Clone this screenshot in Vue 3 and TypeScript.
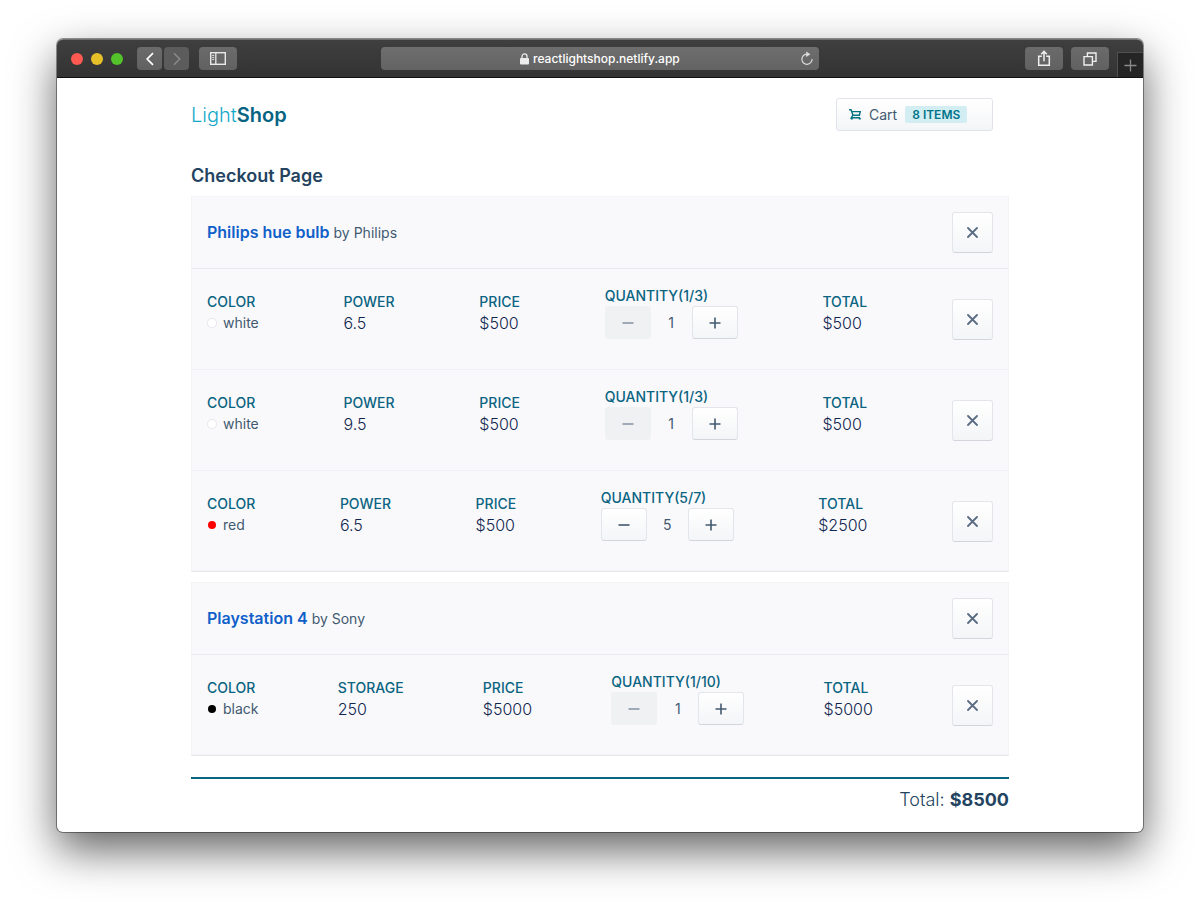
<script setup lang="ts">
import { computed, reactive } from 'vue'

interface Variant {
  id: number
  color: string
  swatch: string
  specLabel: string
  spec: string
  price: number
  count: number
  stock: number
}

interface Product {
  id: number
  name: string
  brand: string
  variants: Variant[]
}

const products = reactive<Product[]>([
  {
    id: 1,
    name: 'Philips hue bulb',
    brand: 'Philips',
    variants: [
      { id: 1, color: 'white', swatch: '#ffffff', specLabel: 'Power', spec: '6.5', price: 500, count: 1, stock: 3 },
      { id: 2, color: 'white', swatch: '#ffffff', specLabel: 'Power', spec: '9.5', price: 500, count: 1, stock: 3 },
      { id: 3, color: 'red', swatch: '#ff0000', specLabel: 'Power', spec: '6.5', price: 500, count: 5, stock: 7 },
    ],
  },
  {
    id: 2,
    name: 'Playstation 4',
    brand: 'Sony',
    variants: [
      { id: 4, color: 'black', swatch: '#000000', specLabel: 'Storage', spec: '250', price: 5000, count: 1, stock: 10 },
    ],
  },
])

const allVariants = computed(() => products.flatMap((p) => p.variants))
const itemCount = computed(() => allVariants.value.reduce((sum, v) => sum + v.count, 0))
const total = computed(() => allVariants.value.reduce((sum, v) => sum + v.count * v.price, 0))

function removeProduct(product: Product) {
  products.splice(products.indexOf(product), 1)
}

function removeVariant(product: Product, variant: Variant) {
  product.variants.splice(product.variants.indexOf(variant), 1)
}
</script>

<template>
  <div class="window">
    <div class="toolbar">
      <div class="lights">
        <span class="light close"></span>
        <span class="light minimize"></span>
        <span class="light expand"></span>
      </div>
      <div class="history">
        <button class="tool narrow" type="button" aria-label="Back">
          <svg width="10" height="14" viewBox="0 0 10 14"><path d="M8 1.2 2.2 7 8 12.8" fill="none" stroke="#fff" stroke-width="1.7" /></svg>
        </button>
        <button class="tool narrow" type="button" aria-label="Forward" disabled>
          <svg width="10" height="14" viewBox="0 0 10 14"><path d="M2 1.2 7.8 7 2 12.8" fill="none" stroke="#8c8c8c" stroke-width="1.4" /></svg>
        </button>
      </div>
      <button class="tool" type="button" aria-label="Show sidebar">
        <svg width="16" height="13" viewBox="0 0 16 13">
          <rect x=".7" y=".7" width="14.6" height="11.6" fill="none" stroke="#e8e8e8" stroke-width="1.4" />
          <path d="M5.8 1v11" stroke="#e8e8e8" stroke-width="1.3" />
          <path d="M2.2 3.4h2M2.2 5.4h2M2.2 7.4h2" stroke="#e8e8e8" stroke-width="1" />
        </svg>
      </button>
      <div class="address">
        <svg class="lock" width="9" height="12" viewBox="0 0 9 12">
          <rect x="0" y="5" width="9" height="6.5" rx="1" fill="#ececec" />
          <path d="M2 5.5V3.4a2.5 2.5 0 0 1 5 0v2.1" fill="none" stroke="#ececec" stroke-width="1.3" />
        </svg>
        <input class="url" type="text" value="reactlightshop.netlify.app" aria-label="Address" readonly />
        <button class="reload" type="button" aria-label="Reload">
          <svg width="14" height="15" viewBox="0 0 14 15">
            <path d="M6.6 3.1a5.1 5.1 0 1 0 5.5 5" fill="none" stroke="#dcdcdc" stroke-width="1.2" />
            <path d="M6.2.4 10.4 3.2 6.2 6z" fill="#dcdcdc" />
          </svg>
        </button>
      </div>
      <div class="actions">
        <button class="tool" type="button" aria-label="Share">
          <svg width="14" height="17" viewBox="0 0 14 17" fill="none" stroke="#efefef" stroke-width="1.5">
            <path d="M4.8 6.2H1.7v9.1h10.6V6.2H9.2M7 11.2V1.6M4.2 4.2 7 1.4l2.8 2.8" />
          </svg>
        </button>
        <button class="tool" type="button" aria-label="Show all tabs">
          <svg width="14" height="14" viewBox="0 0 14 14" fill="none" stroke="#efefef" stroke-width="1.4">
            <path d="M1 4.6h8.4V13H1zM4.4 4.4V1H13v8.4H9.6" />
          </svg>
        </button>
      </div>
      <button class="new-tab" type="button" aria-label="New tab">
        <svg width="13" height="13" viewBox="0 0 13 13"><path d="M6.5.5v12M.5 6.5h12" stroke="#8b8b8b" stroke-width="1.3" /></svg>
      </button>
    </div>

    <div class="page">
      <header class="site-header">
        <a class="logo" href="#"><span class="logo-light">Light</span><span class="logo-bold">Shop</span></a>
        <button class="cart" type="button">
          <svg width="12" height="11" viewBox="0 0 12 11" fill="none" stroke="#047481" stroke-width="1.4">
            <path d="M0 .8h2l2 5.4h6.4l.9-3.6H2.6" />
            <path d="M4 6.2 2.3 8.8h8.9" />
            <path d="M1.8 9.8h2M9.8 9.8h2" stroke-width="1.6" />
          </svg>
          <span>Cart</span>
          <span class="badge">{{ itemCount }} ITEMS</span>
        </button>
      </header>

      <main>
        <h1>Checkout Page</h1>
        <section v-for="product in products" :key="product.id" class="card">
          <div class="card-head">
            <h2><a href="#">{{ product.name }}</a> <span class="brand">by {{ product.brand }}</span></h2>
            <button class="btn remove" type="button" :aria-label="`Remove ${product.name}`" @click="removeProduct(product)">
              <svg width="11" height="11" viewBox="0 0 11 11"><path d="m1 1 9 9m0-9-9 9" stroke="#5a6c82" stroke-width="1.8" stroke-linecap="round" /></svg>
            </button>
          </div>
          <div v-for="variant in product.variants" :key="variant.id" class="row">
            <div class="cell">
              <span class="label">Color</span>
              <span class="color"><i class="dot" :style="{ background: variant.swatch }" :class="{ outlined: variant.color === 'white' }"></i>{{ variant.color }}</span>
            </div>
            <div class="cell">
              <span class="label">{{ variant.specLabel }}</span>
              <span class="value">{{ variant.spec }}</span>
            </div>
            <div class="cell">
              <span class="label">Price</span>
              <span class="value">${{ variant.price }}</span>
            </div>
            <div class="quantity">
              <span class="label">Quantity({{ variant.count }}/{{ variant.stock }})</span>
              <div class="stepper">
                <button class="btn step" type="button" aria-label="Decrease quantity" :disabled="variant.count <= 1" @click="variant.count--">
                  <svg width="12" height="12" viewBox="0 0 12 12"><path d="M.5 6h11" stroke="currentColor" stroke-width="1.6" /></svg>
                </button>
                <span class="count">{{ variant.count }}</span>
                <button class="btn step" type="button" aria-label="Increase quantity" :disabled="variant.count >= variant.stock" @click="variant.count++">
                  <svg width="12" height="12" viewBox="0 0 12 12"><path d="M.5 6h11M6 .5v11" stroke="currentColor" stroke-width="1.6" /></svg>
                </button>
              </div>
            </div>
            <div class="cell">
              <span class="label">Total</span>
              <span class="value">${{ variant.price * variant.count }}</span>
            </div>
            <button class="btn remove" type="button" aria-label="Remove variant" @click="removeVariant(product, variant)">
              <svg width="11" height="11" viewBox="0 0 11 11"><path d="m1 1 9 9m0-9-9 9" stroke="#5a6c82" stroke-width="1.8" stroke-linecap="round" /></svg>
            </button>
          </div>
        </section>
        <p class="grand-total">Total: <strong>${{ total }}</strong></p>
      </main>
    </div>
  </div>
</template>

<style>
body {
  margin: 0;
  background: #fff;
}
</style>

<style scoped>
* {
  box-sizing: border-box;
}

button {
  font: inherit;
  padding: 0;
  border: 0;
  cursor: pointer;
}

svg {
  display: block;
  flex: none;
}

.window {
  margin: 39px 57px 75px;
  border-radius: 6px;
  background: #fff;
  font-family: Inter, "Liberation Sans", sans-serif;
  color: #234361;
  box-shadow: 0 0 0 1px rgba(0, 0, 0, 0.4), 0 18px 44px rgba(0, 0, 0, 0.62);
}

.toolbar {
  display: flex;
  align-items: center;
  height: 39px;
  padding-left: 14px;
  border-top: 1px solid #707070;
  border-bottom: 1px solid #111;
  border-radius: 6px 6px 0 0;
  background: linear-gradient(#3f3f3f, #333);
}

.lights {
  display: flex;
  gap: 8px;
}

.light {
  width: 12px;
  height: 12px;
  border-radius: 50%;
}

.close {
  background: #ff5a52;
}

.minimize {
  background: #e6c029;
}

.expand {
  background: #54c22b;
}

.history {
  display: flex;
  gap: 2px;
  margin: 0 10px 0 14px;
}

.tool {
  display: flex;
  align-items: center;
  justify-content: center;
  width: 38px;
  height: 23px;
  border-radius: 4px;
  background: linear-gradient(#6b6b6b, #616161);
}

.tool.narrow {
  width: 25px;
}

.tool:disabled {
  background: #5c5c5c;
}

.address {
  flex: 1;
  display: flex;
  align-items: center;
  justify-content: center;
  height: 23px;
  margin: 0 206px 0 144px;
  padding-left: 26px;
  border-radius: 4px;
  background: linear-gradient(#6e6e6e, #636363);
}

.url {
  width: 154px;
  margin: 0 auto 0 4px;
  padding: 0;
  border: 0;
  outline: 0;
  background: transparent;
  color: #fff;
  font: 500 12px/20px Inter, "Liberation Sans", sans-serif;
}

.lock {
  margin-left: auto;
}

.reload {
  margin-right: 5px;
  background: transparent;
}

.actions {
  display: flex;
  gap: 8px;
  margin-right: 8px;
}

.new-tab {
  display: flex;
  align-items: center;
  justify-content: center;
  align-self: flex-end;
  width: 26px;
  height: 25px;
  border: 1px solid #505050;
  border-width: 1px 0 0 1px;
  background: #252525;
}

.page {
  max-width: 818px;
  margin: 0 auto;
  padding: 20px 0;
}

.site-header {
  display: flex;
  align-items: center;
  justify-content: space-between;
  padding-right: 16px;
}

.logo {
  display: flex;
  font-size: 20px;
  line-height: 28px;
  text-decoration: none;
}

.logo-light {
  font-weight: 300;
  color: #14a9c9;
}

.logo-bold {
  font-weight: 600;
  color: #066381;
}

.cart {
  display: flex;
  align-items: center;
  gap: 8px;
  width: 157px;
  height: 33px;
  padding-left: 12px;
  border: 1px solid #e1e3ec;
  border-radius: 3px;
  background: linear-gradient(#fff, #f4f5f7);
  color: #425a70;
  font-size: 14px;
}

.badge {
  padding: 0 7px;
  border-radius: 2px;
  background: #d2eef3;
  color: #007489;
  font-size: 12px;
  font-weight: 600;
  line-height: 17px;
}

h1 {
  margin: 32px 0 8px;
  color: #234361;
  font-size: 18px;
  font-weight: 600;
  line-height: 25px;
}

.card {
  margin-bottom: 10px;
  border-bottom: 1px solid #e6e8ed;
  background: #f9f9fb;
  box-shadow: inset 0 0 0 1px #f3f4f6;
}

.card-head {
  display: flex;
  align-items: center;
  justify-content: space-between;
  padding: 16px;
}

h2 {
  margin: 0;
  font-size: 16px;
  font-weight: 600;
  line-height: 24px;
}

h2 a {
  color: #1060ca;
  text-decoration: none;
}

.brand {
  color: #425a70;
  font-size: 14px;
  font-weight: 400;
}

.row {
  display: flex;
  align-items: flex-end;
  justify-content: space-between;
  padding: 17px 16px 30px;
  border-top: 1px solid #e8eaee;
}

.row + .row {
  border-top-color: #f0f1f4;
}

.cell {
  display: flex;
  flex-direction: column;
  padding-bottom: 5px;
}

.label {
  display: block;
  color: #0a6482;
  font-size: 14px;
  font-weight: 500;
  line-height: 20px;
  text-transform: uppercase;
}

.value {
  color: #10264f;
  font-size: 16px;
  font-weight: 300;
  line-height: 22px;
}

.color {
  display: flex;
  align-items: center;
  gap: 7px;
  color: #425a70;
  font-size: 14px;
  line-height: 22px;
}

.dot {
  width: 8px;
  height: 8px;
  margin-left: 1px;
  border-radius: 50%;
}

.dot.outlined {
  box-shadow: 0 0 0 1px #e6e8ec;
}

.btn {
  display: flex;
  align-items: center;
  justify-content: center;
  border: 1px solid #e2e5e9;
  border-bottom-color: #d2d6dc;
  border-radius: 3px;
  background: linear-gradient(#fff, #f4f5f7);
  color: #425a70;
}

.remove {
  width: 41px;
  height: 41px;
  margin-bottom: -1px;
}

.stepper {
  display: flex;
  align-items: center;
}

.step {
  width: 46px;
  height: 33px;
}

.step:disabled {
  border-color: transparent;
  background: #f0f1f3;
  color: #8a98a8;
}

.count {
  width: 41px;
  color: #425a70;
  font-size: 14px;
  text-align: center;
}

.grand-total {
  margin: 21px 0 0;
  padding-top: 8px;
  border-top: 2px solid #096580;
  color: #234361;
  font-size: 18px;
  font-weight: 300;
  line-height: 25px;
  text-align: right;
}

.grand-total strong {
  font-weight: 700;
}
</style>
